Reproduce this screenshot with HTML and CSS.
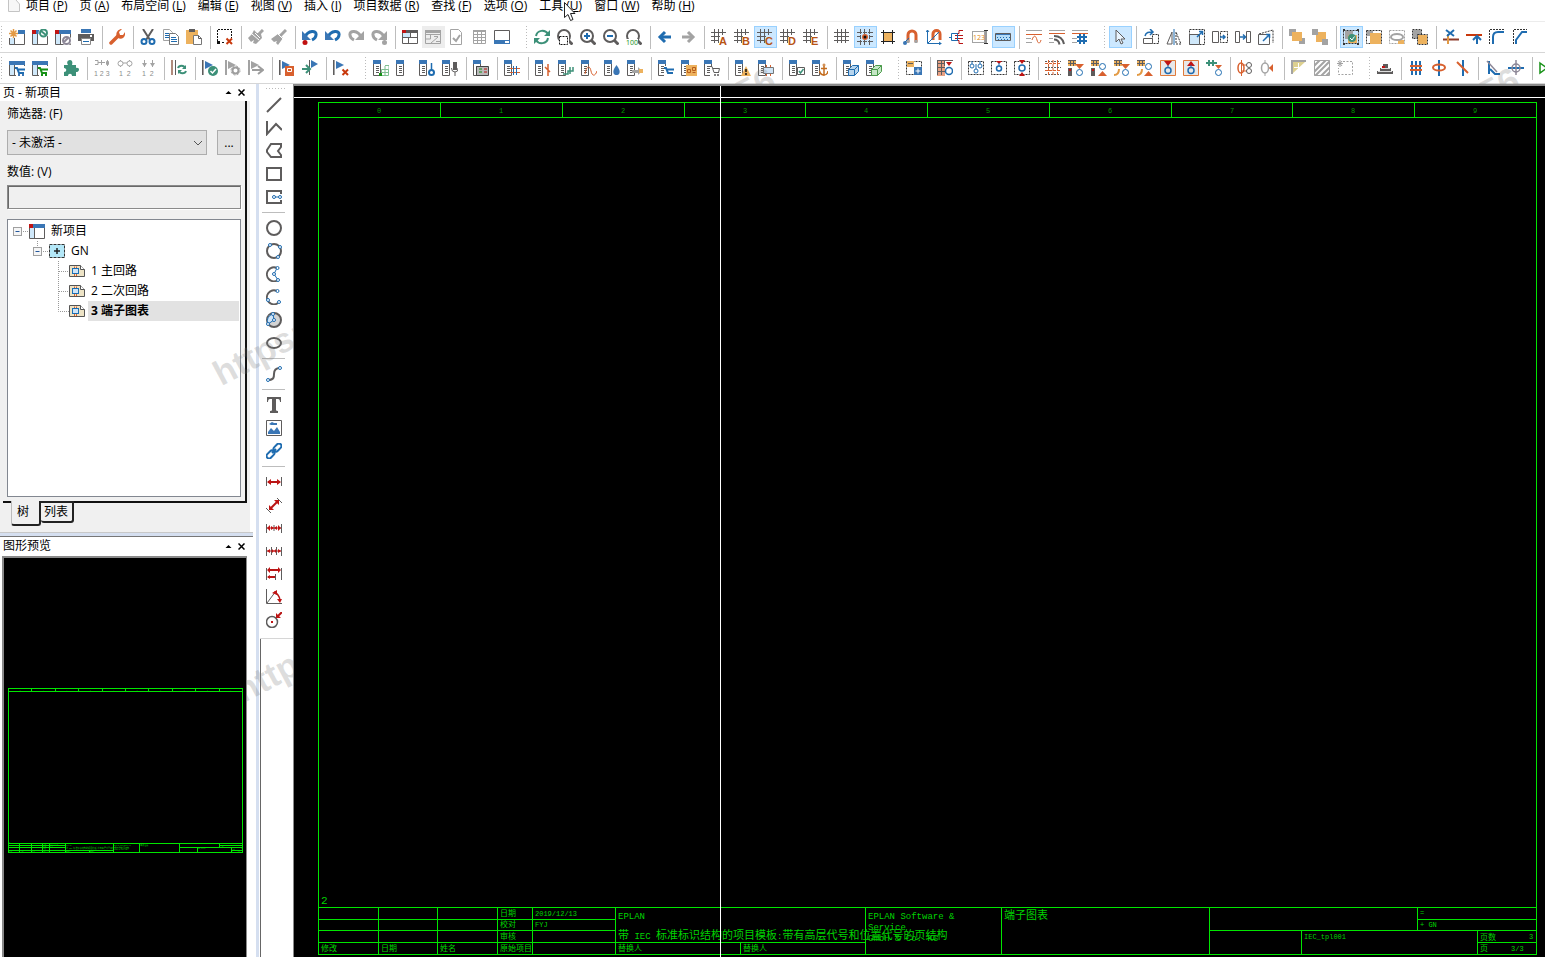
FILE: index.html
```html
<!DOCTYPE html>
<html lang="zh-CN">
<head>
<meta charset="utf-8">
<title>新项目</title>
<link rel="stylesheet" href="styles.css">
</head>
<body>
<svg class="defs" aria-hidden="true">
  <symbol id="win" viewBox="0 0 16 16"><path class="fl" d="M1 5h5v11H1z"/><path class="k" d="M.5 5v10.5h15V5M5.5 5v11"/><path class="fb" d="M0 1h16v4H0z"/></symbol>
  <symbol id="redsq" viewBox="0 0 16 16"><path class="fr" d="M0 1h4v4H0z"/></symbol>
  <symbol id="strip" viewBox="0 0 16 16"><path class="fb" d="M0 0h8v4H0z"/><path class="k" d="M.5 4v11.500h7V4M3 6.500h3M3 8.500h3M3 10.500h3M3 12.500h3"/></symbol>
  <symbol id="flag" viewBox="0 0 16 16"><path class="k" d="M.5 0v15"/><path class="y" d="M1.500 0v15"/><path class="fb" d="M3 1l8 4-8 4z"/></symbol>
  <symbol id="flagoff" viewBox="0 0 16 16"><path class="y" d="M.5 0v15M1.500 0v15"/><path class="fy" d="M3 1l8 4-8 4z"/></symbol>
  <symbol id="grid" viewBox="0 0 16 16"><path class="k" d="M3.500 0v14M7.500 0v14M11.500 0v14M0 3.500h15M0 7.500h15M0 11.500h15"/></symbol>
  <symbol id="grids" viewBox="0 0 16 16"><path class="k" d="M3.500 0v14M7.500 0v14M11.500 0v6M0 3.500h15M0 7.500h9M0 11.500h8"/></symbol>
  <symbol id="lens" viewBox="0 0 16 16"><circle class="k w2" cx="7" cy="7" r="6"/><path class="k w3" d="M11 11l4.500 4.500"/></symbol>
  <symbol id="undo" viewBox="0 0 16 16"><path class="b w3" d="M3 8C6 1 15 1 14 6c0 3-2 4-4 5"/><path class="fb" d="M0 2v9h9z"/></symbol>
  <symbol id="redo" viewBox="0 0 16 16"><path class="y w3" d="M13 8C10 1 1 1 2 6c0 3 2 4 4 5"/><path class="fy" d="M16 2v9H7z"/></symbol>
  <symbol id="dash" viewBox="0 0 16 16"><rect class="kk dd" x=".5" y="1.500" width="15" height="13"/></symbol>
  <symbol id="xred" viewBox="0 0 16 16"><path class="x w2" d="M9.500 9.500l5.500 5.500M15 9.500L9.500 15"/></symbol>
  <symbol id="okay" viewBox="0 0 16 16"><circle class="fg" cx="11" cy="11" r="5"/><path d="M8.500 11l2 2 3.500-4" stroke="#fff" stroke-width="1.500"/></symbol>
  <symbol id="device" viewBox="0 0 16 16"><path class="ft" d="M0 0h8v6H0z"/><path class="k" d="M0 .5h8M0 3.500h8M2.500 0v6M5.500 0v6"/></symbol>
  <symbol id="page" viewBox="0 0 16 14"><path d="M.5 1.500h11l4 4v7H.5z" fill="#ede3c5" stroke="#555"/><path d="M11.500 1.500v4h4" fill="#fff" stroke="#555"/><rect x="3.500" y="4.500" width="6" height="5" fill="#cfe4f7" stroke="#1a6fb5"/><path class="o" d="M5.500 2.500V4M7.500 2.500V4M5.500 10v2M7.500 10v2"/></symbol>
</svg>

<nav class="menu" aria-label="主菜单">
  <svg class="docicon" viewBox="0 0 12 12"><path d="M.5 0v11.500h11V4L8 0" fill="#f7f7f7" stroke="#c4c4c4"/></svg>
  <button>项目 (<u>P</u>)</button><button>页 (<u>A</u>)</button><button>布局空间 (<u>L</u>)</button><button>编辑 (<u>E</u>)</button><button>视图 (<u>V</u>)</button><button>插入 (<u>I</u>)</button><button>项目数据 (<u>R</u>)</button><button>查找 (<u>F</u>)</button><button>选项 (<u>O</u>)</button><button>工具 (<u>U</u>)</button><button>窗口 (<u>W</u>)</button><button>帮助 (<u>H</u>)</button>
</nav>

<div class="bar" role="toolbar" aria-label="标准">
  <button aria-label="新建"><svg viewBox="0 0 16 16"><use href="#win"/><path d="M0 0h9v9H0z" fill="#fff"/><path class="t" stroke-width="1.500" d="M4.500 0v9M0 4.500h9M1.500 1.500l6 6M7.500 1.500l-6 6"/></svg></button>
  <button aria-label="打开"><svg viewBox="0 0 16 16"><use href="#win"/><use href="#redsq"/><circle cx="11.500" cy="4" r="5" fill="#fff"/><circle class="g w2" cx="11.500" cy="4" r="3.500"/><path class="g w2" d="M9 2l5 4"/></svg></button>
  <button aria-label="关闭"><svg viewBox="0 0 16 16"><use href="#win"/><use href="#redsq"/><circle cx="11.500" cy="11.500" r="5" fill="#fff"/><circle cx="11.500" cy="11.500" r="3.500" stroke="#8c8797" stroke-width="2"/><path d="M9 13l4-4" stroke="#8c8797" stroke-width="2"/></svg></button>
  <button aria-label="打印"><svg viewBox="0 0 16 16"><path class="fb" d="M3 0h10v4H3z"/><path class="fk" d="M0 5h16v7h-3v-2H3v2H0z"/><path d="M3.500 9.500h9v6h-9z" fill="#fff" stroke="#888"/><path class="b" d="M5 12.500h6"/><path fill="#fff" d="M12 6h2v2h-2z"/></svg></button>
  <i></i>
  <button aria-label="设置"><svg viewBox="0 0 16 16"><path class="o" stroke-width="3.500" stroke-linecap="round" d="M2 14l7-7"/><path class="fo" d="M8 8C6 4 9 0 13 0l-3 3 1 3 3 0 2-3c1 5-3 8-7 6z"/></svg></button>
  <i></i>
  <button aria-label="剪切"><svg viewBox="0 0 16 16"><path class="k w2" d="M3 0l7 11M13 0L6 11"/><circle class="b w2" cx="4" cy="12.500" r="2.500"/><circle class="b w2" cx="12" cy="12.500" r="2.500"/></svg></button>
  <button aria-label="复制"><svg viewBox="0 0 16 16"><path d="M.5.500h6l3 3v8h-9z" fill="#fff" class="y"/><path class="b" d="M2 4.500h4M2 6.500h4M2 8.500h4"/><path d="M6.500 4.500h6l3 3v8h-9z" fill="#fff" stroke="#777"/><path class="b" d="M8 8.500h5M8 10.500h6M8 12.500h6"/></svg></button>
  <button aria-label="粘贴"><svg viewBox="0 0 16 16"><path class="ft" d="M0 1h12v14H0z"/><path class="fk" d="M3 0h6v3H3z"/><path d="M7.500 6.500h5l3 3v6h-8z" fill="#fff" stroke="#777"/><path class="k" d="M12.500 6.500v3h3"/></svg></button>
  <i></i>
  <button aria-label="删除"><svg viewBox="0 0 16 16"><path d="M.5 12V.5h14V9" stroke="#111" stroke-dasharray="2 1"/><path d="M0 12h3v3H0zM5 13h2v1H5z" fill="#111"/><use href="#xred"/></svg></button>
  <i></i>
  <button aria-label="格式刷"><svg viewBox="0 0 16 16"><path class="y w3" d="M15 1l-6 6"/><path class="fy" d="M0 9l4-4 2-4 3 3 4 1 1 4-6 6-3-1 1-3-3 2z"/><path d="M4 5l7 6M7 4l5 5" stroke="#fff"/></svg></button>
  <button aria-label="应用格式"><svg viewBox="0 0 16 16"><path class="y w3" d="M15 1l-6 6"/><path class="fy" d="M0 10l7-5 5 4-5 7-2-2 1-2-3 1z"/><path d="M7 5l5 5" stroke="#fff"/></svg></button>
  <i></i>
  <button aria-label="撤消列表"><svg viewBox="0 0 16 16"><use href="#undo"/><circle cx="3" cy="13.500" r="2.500" fill="#c01010"/></svg></button>
  <button aria-label="撤消"><svg viewBox="0 0 16 16"><use href="#undo"/></svg></button>
  <button aria-label="恢复"><svg viewBox="0 0 16 16"><use href="#redo"/></svg></button>
  <button aria-label="恢复列表"><svg viewBox="0 0 16 16"><use href="#redo"/><circle class="fy" cx="13.500" cy="13.500" r="2.500"/></svg></button>
  <i></i>
  <button aria-label="工作区域"><svg viewBox="0 0 16 16"><path class="k" d="M.5 2.500h15v12H.5zM.5 8.500h15M8.500 2v6M6.500 8v6"/><path class="fl" d="M1 4h7v4H1z"/><path class="fk" d="M0 1h16v3H0z"/><path class="fr" d="M0 1h4v3H0z"/></svg></button>
  <button class="gray" aria-label="窗口"><svg viewBox="0 0 16 16"><path class="y" d="M.5 1.500h15v13H.5zM0 5.500h16M5.500 6v4H1M9 7.500h4M11 12.500h4M6 14l7-6"/><path class="fy" d="M0 1h16v3H0z"/></svg></button>
  <button aria-label="检查"><svg viewBox="0 0 16 16"><path class="y" d="M2.500.500h8l3 3v12h-11z"/><path class="y w2" d="M5 9l3 3 4-6"/></svg></button>
  <button aria-label="表格"><svg viewBox="0 0 16 16"><path class="y" d="M2.500 1.500h12v13h-12zM3 5.500h11M3 8.500h11M3 11.500h11M6.500 3v11M10.500 3v11"/><path class="fy" d="M2 1h13v2H2z"/></svg></button>
  <button aria-label="屏幕"><svg viewBox="0 0 16 16"><path class="k" d="M.5 1.500h15v10H.5z"/><path class="fb" d="M0 11h16v4H0z"/><path fill="#fff" d="M11 12h4v2h-4z"/></svg></button>
  <i class="grip"></i>
  <button aria-label="刷新"><svg viewBox="0 0 16 16"><path class="g w2" d="M2 7c1-6 9-7 12-2M14 9c-1 6-9 7-12 2"/><path class="fg" d="M16 1v6h-6zM0 15V9h6z"/></svg></button>
  <button aria-label="缩放区域"><svg viewBox="0 0 16 16"><use href="#lens"/><path fill="#fff" d="M2 7h10v9H2z"/><path d="M2.500 7.500h8v8h-8z" stroke="#111" stroke-dasharray="2 1"/></svg></button>
  <button aria-label="放大"><svg viewBox="0 0 16 16"><use href="#lens"/><path class="b w2" d="M4 7h6M7 4v6"/></svg></button>
  <button aria-label="缩小"><svg viewBox="0 0 16 16"><use href="#lens"/><path class="b w2" d="M4 7h6"/></svg></button>
  <button aria-label="整个页"><svg viewBox="0 0 16 16"><use href="#lens"/><path fill="#fff" d="M0 10h12v6H0z"/><text x="0" y="16" font-size="7" fill="#159015">100</text></svg></button>
  <i></i>
  <button aria-label="后退"><svg viewBox="0 0 16 16"><path class="b w3" d="M3 8h11"/><path class="b w3" d="M8 3L3 8l5 5"/></svg></button>
  <button aria-label="前进"><svg viewBox="0 0 16 16"><path class="y w3" d="M2 8h11"/><path class="y w3" d="M8 3l5 5-5 5"/></svg></button>
  <i></i>
  <button aria-label="栅格 A"><svg viewBox="0 0 16 16"><use href="#grids"/><text class="let" x="8" y="16">A</text></svg></button>
  <button aria-label="栅格 B"><svg viewBox="0 0 16 16"><use href="#grids"/><text class="let" x="8" y="16">B</text></svg></button>
  <button class="on" aria-label="栅格 C"><svg viewBox="0 0 16 16"><use href="#grids"/><text class="let" x="8" y="16">C</text></svg></button>
  <button aria-label="栅格 D"><svg viewBox="0 0 16 16"><use href="#grids"/><text class="let" x="8" y="16">D</text></svg></button>
  <button aria-label="栅格 E"><svg viewBox="0 0 16 16"><use href="#grids"/><text class="let" x="8" y="16">E</text></svg></button>
  <i></i>
  <button aria-label="栅格"><svg viewBox="0 0 16 16"><use href="#grid"/></svg></button>
  <button class="on" aria-label="捕捉到栅格"><svg viewBox="0 0 16 16"><path class="k" d="M3.500 0v5M3.500 6v4M3.500 11v5M12.500 0v5M12.500 6v4M12.500 11v5M0 3.500h5M6 3.500h4M11 3.500h5M0 12.500h5M6 12.500h4M11 12.500h5M7.500 0v5M7.500 11v5M0 7.500h4M12 7.500h4"/><circle class="fo" cx="8" cy="8" r="3"/><circle cx="8" cy="8" r="1.500" fill="#111"/></svg></button>
  <button aria-label="对齐到栅格"><svg viewBox="0 0 16 16"><path class="ft" d="M4 4h8v8H4z"/><path d="M3.500 1v14M12.500 1v14M1 3.500h14M1 12.500h14" stroke="#222"/></svg></button>
  <button aria-label="对象捕捉"><svg viewBox="0 0 16 16"><path class="o w3" d="M5 13V6a4 4 0 0 1 8 0v7"/><path class="y w3" d="M5 11v3M13 11v3"/><circle class="fb" cx="2" cy="14" r="2"/><path class="b" d="M2 13l4-4"/></svg></button>
  <button aria-label="设计模式"><svg viewBox="0 0 16 16"><path class="o w3" d="M7 11V5a3.500 3.500 0 0 1 7 0v6"/><path class="b" d="M1.500 1v13.500h14M2 14L13 3M0 3l1.500-2L3 3M13 13l2 1.500-2 1.500"/></svg></button>
  <button aria-label="智能连接"><svg viewBox="0 0 16 16"><path class="rd" d="M7 4.500h3v-3h4M7 11.500h3v3h4M6 6.500h8M6 9.500h8"/><path class="b" d="M2.500 4.500h6v7h-6zM0 8.500h3"/></svg></button>
  <button aria-label="坐标输入"><svg viewBox="0 0 16 16"><rect class="y" x=".5" y="2.500" width="12" height="11"/><text x="1" y="11" font-size="7" fill="#e08a20">123</text><path d="M12 1.500h4M12 14.500h4M14 2v12" stroke="#333"/></svg></button>
  <button class="on" aria-label="插入点"><svg viewBox="0 0 16 16"><path fill="#b4dcf8" class="k" d="M.5 4.500h15v7H.5z"/><path class="fb" d="M1 5h14v1H1z"/><path class="b" stroke-dasharray="1 2" d="M2 8.500h13M3 10.500h12"/></svg></button>
  <i></i>
  <button aria-label="连接符号"><svg viewBox="0 0 16 16"><path class="y" d="M0 1.500h16M0 9.500h5M0 13.500h6"/><path class="o" d="M0 5.500h16M6 11c2-6 4-4 5 0s3 4 4 0"/></svg></button>
  <button aria-label="信号"><svg viewBox="0 0 16 16"><path class="y" d="M0 1.500h16M0 9.500h4M0 13.500h5"/><path class="o" d="M0 4.500h16"/><path class="k w2" d="M5 7c6 0 9 3 10 8M5 10.500c3 0 5 2 5.500 5"/></svg></button>
  <button aria-label="网格连接"><svg viewBox="0 0 16 16"><path class="y" d="M0 1.500h16M0 9.500h5M0 13.500h5"/><path class="o" d="M0 4.500h16"/><path class="b w2" d="M8 5v10M12 5v10M5 8h10M5 12h10"/></svg></button>
  <i class="grip"></i>
  <button class="on" aria-label="选择"><svg viewBox="0 0 16 16"><path d="M4 1v12l3-3 2 5 2-1-2-4h4z" fill="#eaf5ff" class="k"/></svg></button>
  <i></i>
  <button aria-label="旋转"><svg viewBox="0 0 16 16"><rect class="kk dd" x="9.500" y="5.500" width="6" height="9"/><path fill="#fff" class="k" d="M.5 9.500h9v5h-9z"/><path class="b" stroke-width="1.500" d="M2 7c1-4 4-4 7-4M7 0l3 3-3 3"/></svg></button>
  <button aria-label="镜像"><svg viewBox="0 0 16 16"><path class="k" d="M6 3v12H1z"/><path class="kk dd" d="M10 3v12h5z"/><path class="b" d="M8 0v16"/></svg></button>
  <button aria-label="比例缩放"><svg viewBox="0 0 16 16"><rect class="kk dd" x=".5" y=".5" width="15" height="15"/><path class="k" d="M.5 5.500h10v10H.5z" fill="#cfe8fa"/><path class="b" stroke-width="1.500" d="M8 8l5-5M10 2.500h3.500V6"/></svg></button>
  <button aria-label="移动"><svg viewBox="0 0 16 16"><path class="k" d="M.5 2.500h6v11h-6z"/><path class="kk dd" d="M8.500 2.500h7v11h-7z"/><path class="b" stroke-width="1.500" d="M8 8h5M11 6l2 2-2 2"/></svg></button>
  <button aria-label="拉伸"><svg viewBox="0 0 16 16"><path class="k" d="M.5 2.500h4v11h-4zM11.500 2.500h4v11h-4z"/><path class="b" stroke-width="1.500" d="M5 8h5M8 5.500L10.500 8 8 10.500"/></svg></button>
  <button aria-label="修改长度"><svg viewBox="0 0 16 16"><path class="kk dd" d="M1 5l14-4v13"/><path class="k" d="M.5 5.500h11v10H.5z" fill="#f6fbff"/><path class="b" stroke-width="1.500" d="M5 12l6-6M8 5.500h3.500V9"/></svg></button>
  <i></i>
  <button aria-label="置于后面"><svg viewBox="0 0 16 16"><path class="fy" d="M0 0h7v7H0zM10 9h6v6h-6z"/><path class="ft" d="M3 3h10v9H3z"/></svg></button>
  <button aria-label="置于前面"><svg viewBox="0 0 16 16"><path class="ft" d="M4 3h10v10H4z"/><path class="fy" d="M0 0h6v6H0zM10 10h6v6h-6z"/></svg></button>
  <i></i>
  <button class="on" aria-label="编组"><svg viewBox="0 0 16 16"><use href="#dash"/><path class="fy" d="M2 2h8v8H2z"/><path class="ft" d="M5 6h9v8H5z"/><path fill="#333" d="M0 0h2v2H0zM14 0h2v2h-2zM0 14h2v2H0zM14 14h2v2h-2z"/><circle cx="9" cy="9" r="4" class="fg"/><path stroke="#fff" d="M7 9l2 2 2.500-3.500"/></svg></button>
  <button aria-label="解组"><svg viewBox="0 0 16 16"><use href="#dash"/><path class="fy" d="M1 2h6v5H1z"/><path class="ft" d="M4 4h11v11H4z"/></svg></button>
  <button aria-label="组合编辑"><svg viewBox="0 0 16 16"><rect class="y dd" x=".5" y="1.500" width="15" height="13"/><path class="ft" d="M9 11h6v4H9z"/><ellipse class="y w2" cx="8" cy="8" rx="6" ry="3"/></svg></button>
  <button aria-label="组属性"><svg viewBox="0 0 16 16"><path class="fy" d="M1 1h8v8H1z"/><path class="kk dd" d="M.5.500h9v9h-9z"/><path class="ft" d="M6 6h9v9H6z"/><path class="kk dd" d="M5.500 5.500h10v10h-10z"/></svg></button>
  <i></i>
  <button aria-label="修剪"><svg viewBox="0 0 16 16"><path d="M0 10.500h16" stroke="#8c3b2a" stroke-width="2"/><path class="t w2" d="M5 15V5"/><path class="b w2" d="M3 1l8 6M11 1L4 7"/></svg></button>
  <button aria-label="延长"><svg viewBox="0 0 16 16"><path class="x w2" d="M0 6h16"/><path class="b w2" d="M11 15V8M7 11l4-4 4 4"/></svg></button>
  <button aria-label="圆角"><svg viewBox="0 0 16 16"><path class="kk dd" d="M.5 15V.5H15"/><path class="b w2" d="M4 15V8q0-5 5-5h6"/></svg></button>
  <button aria-label="倒角"><svg viewBox="0 0 16 16"><path class="kk dd" d="M1.500 15V.5H15"/><path class="b w2" d="M4 15v-4l6-8h5"/></svg></button>
</div>

<div class="bar" role="toolbar" aria-label="项目数据">
  <button aria-label="部件管理"><svg viewBox="0 0 16 16"><use href="#win"/><path fill="#fff" d="M7 6h9v10H7z"/><path class="b w2" d="M6 8h2l2 5h5M9 9.500h7"/><path class="fb" d="M9 14h2v2H9zM13 14h2v2h-2z"/></svg></button>
  <button aria-label="部件选择"><svg viewBox="0 0 16 16"><use href="#win"/><path fill="#fff" d="M7 6h9v10H7z"/><path class="gr w2" d="M6 8h2l2 5h5M9 9.500h7"/><path fill="#159015" d="M9 14h2v2H9zM13 14h2v2h-2z"/></svg></button>
  <i></i>
  <button aria-label="插件"><svg viewBox="0 0 16 16"><path class="fg" d="M1 5h4c-2-3 0-5 2-5s3 2 2 5h4v3c4-1 4 4 0 4v4H9c0-3-4-3-4 0H1v-4c3 0 3-4 0-4z"/></svg></button>
  <i></i>
  <button aria-label="编号"><svg viewBox="0 0 16 16"><path class="y" d="M1 .5h3v4H1M4 2.500h7M7.500 0v5M13.500 0v6M12.500 1.500h2v3h-2z"/><text class="num" x="0" y="16">1 2 3</text></svg></button>
  <button aria-label="设备编号"><svg viewBox="0 0 16 16"><path class="y" d="M3.500 0v7M12.500 0v7M6 3h4"/><circle class="y" cx="3.500" cy="3.500" r="2.500" fill="#fff"/><circle class="y" cx="12.500" cy="3.500" r="2.500" fill="#fff"/><text class="num" x="2" y="16">1  2</text></svg></button>
  <button aria-label="端子编号"><svg viewBox="0 0 16 16"><path class="y" d="M4.500 0v7M12.500 0v7"/><path class="fy" d="M2 3h5l-2.500 4zM10 3h5l-2.500 4z"/><text class="num" x="2" y="16">1  2</text></svg></button>
  <i></i>
  <button aria-label="更新"><svg viewBox="0 0 16 16"><path d="M1 0v15" stroke="#b08a7c" stroke-width="2"/><path class="k" d="M4.500 0v15"/><path class="g w2" d="M7 8c1-3 6-3 7 0M15 11c-1 3-6 3-7 0"/><path class="fg" d="M15 5v4h-4zM7 14v-4h4z"/></svg></button>
  <i></i>
  <button aria-label="检查项目"><svg viewBox="0 0 16 16"><use href="#flag"/><use href="#okay"/></svg></button>
  <button aria-label="检查设置"><svg viewBox="0 0 16 16"><use href="#flagoff"/><circle cx="10.500" cy="10.500" r="3" stroke="#9d9d9d" stroke-width="2" fill="#fff"/><circle cx="10.500" cy="10.500" r="4.500" stroke="#9d9d9d" stroke-dasharray="2 1.500"/></svg></button>
  <button aria-label="检查下一个"><svg viewBox="0 0 16 16"><use href="#flagoff"/><path d="M4 10h10M10 6l5 4-5 4" stroke="#9d9d9d" stroke-width="2"/></svg></button>
  <i></i>
  <button aria-label="消息管理"><svg viewBox="0 0 16 16"><use href="#flag"/><path class="fo" d="M6 6h9v10H6z"/><path stroke="#fff" d="M8.500 8.500h4v3h-4z"/></svg></button>
  <button aria-label="转到消息"><svg viewBox="0 0 16 16"><path class="k" d="M7.500 0v15"/><path class="fb" d="M9 0l7 4-7 4z"/><path class="g w2" d="M0 9h7M4 5l4 4-4 4"/></svg></button>
  <i></i>
  <button aria-label="删除消息"><svg viewBox="0 0 16 16"><use href="#flag"/><use href="#xred"/></svg></button>
  <i class="grip"></i>
  <button aria-label="端子排"><svg viewBox="0 0 16 16"><use href="#strip"/><path stroke="#7fbf90" d="M8.500 9.500h7v6h-7zM12 6v10M8 12.500h8M12 5.500h4V10"/><path fill="#159015" d="M6 13h3v3H6z"/></svg></button>
  <button aria-label="插头"><svg viewBox="0 0 16 16"><use href="#strip"/></svg></button>
  <button aria-label="电缆"><svg viewBox="0 0 16 16"><use href="#strip"/><path class="b" stroke-width="1.500" d="M12.500 3v7"/><circle class="b" stroke-width="2" cx="12.500" cy="12.500" r="2.500"/></svg></button>
  <button aria-label="话筒"><svg viewBox="0 0 16 16"><use href="#strip"/><path class="fk" d="M11 2h4v8h-4z"/><path class="k" d="M9.500 8q0 4 3.500 4t3-4M13 12v4"/></svg></button>
  <i></i>
  <button aria-label="PLC"><svg viewBox="0 0 16 16"><use href="#strip"/><path d="M3.500 6.500h12v9h-12z" fill="#b9b9b9" stroke="#444"/><path class="gr" d="M6 9h3M6 12h3"/><path class="rd" d="M11 9h3M11 12h3"/></svg></button>
  <i></i>
  <button aria-label="连接"><svg viewBox="0 0 16 16"><use href="#strip"/><path class="o" d="M6 8.500h10M6 12.500h10"/><path class="b" d="M9.500 6v9M12.500 6v9"/></svg></button>
  <i></i>
  <button aria-label="连接定义"><svg viewBox="0 0 16 16"><use href="#strip"/><path class="o" stroke-width="1.500" d="M13 4v12M10 7l5 5"/></svg></button>
  <button aria-label="电位"><svg viewBox="0 0 16 16"><use href="#strip"/><path class="g" stroke-width="1.500" d="M5 14h5v-3h5V7M12 7v7"/></svg></button>
  <button aria-label="信号曲线"><svg viewBox="0 0 16 16"><use href="#strip"/><path class="o" d="M4 14c2-10 5-8 6-3s4 6 6 0"/></svg></button>
  <button aria-label="流体"><svg viewBox="0 0 16 16"><use href="#strip"/><path class="fb" d="M12.500 5c6 8 2 10 0 10s-6-2 0-10z"/></svg></button>
  <button aria-label="中断点"><svg viewBox="0 0 16 16"><use href="#strip"/><path class="fy" d="M5 10h6V7l4 4-4 4v-2H5z"/><path class="ft" d="M12 9h4v4h-4z"/></svg></button>
  <i></i>
  <button aria-label="部件列表"><svg viewBox="0 0 16 16"><use href="#strip"/><path fill="#fff" d="M6 6h10v10H6z"/><path class="b w2" d="M6 8h2l2 5h5M9 9.500h7"/></svg></button>
  <button aria-label="安装板"><svg viewBox="0 0 16 16"><use href="#strip"/><path class="ft" d="M5 5h11v11H5z"/><path d="M6.500 9.500h3v3h-3zM11.500 7.500h3v3h-3zM11.500 12.500h3" stroke="#b85c1c"/></svg></button>
  <button aria-label="购物车"><svg viewBox="0 0 16 16"><use href="#strip"/><path fill="#fff" d="M6 6h10v10H6z"/><path class="k" d="M6 6.500h2l2 6h5M9 8.500h6.500l-1 4"/><circle cx="11" cy="15" r="1" class="fk"/><circle cx="14" cy="15" r="1" class="fk"/></svg></button>
  <i></i>
  <button aria-label="警告"><svg viewBox="0 0 16 16"><use href="#strip"/><path class="ft" d="M11 6l5 10H6z"/><path stroke="#111" stroke-width="1.500" d="M11 9v3M11 13v2"/></svg></button>
  <button aria-label="宏"><svg viewBox="0 0 16 16"><use href="#strip"/><path d="M5.500 7.500h10v6h-10z" fill="#cfe4f7" stroke="#777"/><path class="o" d="M8.500 5v2M12.500 5v2M8.500 14v2M12.500 14v2"/></svg></button>
  <i></i>
  <button aria-label="修订"><svg viewBox="0 0 16 16"><use href="#strip"/><path d="M8.500 7.500h7v7h-7z" fill="#fff" class="k"/><path class="g" stroke-width="1.500" d="M10 11l1.500 2 3-4"/></svg></button>
  <button aria-label="锚点"><svg viewBox="0 0 16 16"><use href="#strip"/><path d="M12 6v10M9 8.500h6M7.500 11q1 4 4.500 4t4-4" stroke="#c36c1e" stroke-width="1.500"/><circle cx="12" cy="5" r="1" stroke="#c36c1e"/></svg></button>
  <i></i>
  <button aria-label="3D 布局"><svg viewBox="0 0 16 16"><use href="#strip"/><path d="M5.500 9.500l4-4h6v6l-4 4h-6zM5.500 9.500h6v6M11.500 9.500l4-4" fill="#b7d5ee" class="b"/></svg></button>
  <button aria-label="3D 宏"><svg viewBox="0 0 16 16"><use href="#strip"/><path d="M5.500 9.500l4-4h6v6l-4 4h-6zM5.500 9.500h6v6M11.500 9.500l4-4" fill="#c5e6c5" stroke="#4a9a4a"/></svg></button>
  <i class="grip"></i>
  <button aria-label="插入框"><svg viewBox="0 0 16 16"><use href="#dash"/><path class="ft" d="M1 1h7v6H1z"/><path class="k" d="M2 3.500h5"/><path class="fb" d="M8 7h8v8H8z"/><path stroke="#fff" d="M9.500 11h5M12 8.500v5"/></svg></button>
  <i></i>
  <button aria-label="符号"><svg viewBox="0 0 16 16"><path class="fo" d="M0 0h8v16H0z" opacity=".6"/><path class="k" d="M.5 0v15M4.500 0v15M0 3.500h8M0 7.500h8M0 11.500h8M0 .5h16M7.500 0v6"/><path class="fr" d="M9 2h6l-3 4z"/><circle class="b" stroke-width="1.500" cx="12" cy="11" r="3.500" fill="#fff"/></svg></button>
  <i></i>
  <button aria-label="设备组"><svg viewBox="0 0 16 16"><use href="#dash"/><g class="b" fill="#fff"><circle cx="4" cy="6" r="2"/><circle cx="12" cy="6" r="2"/><circle cx="8" cy="11" r="2"/></g><path class="b" d="M4 1v3M12 1v3M8 4v5"/></svg></button>
  <button aria-label="单端设备"><svg viewBox="0 0 16 16"><use href="#dash"/><path class="fr" d="M5 1h6L8 4z"/><path class="b" d="M8 3v3"/><circle class="b" stroke-width="1.500" cx="8" cy="8.500" r="2.500" fill="#fff"/></svg></button>
  <button aria-label="双端设备"><svg viewBox="0 0 16 16"><use href="#dash"/><path class="fr" d="M5 0h6L8 4zM5 16h6l-3-4z"/><circle class="b" stroke-width="1.500" cx="8" cy="8" r="3" fill="#fff"/></svg></button>
  <i></i>
  <button aria-label="多线"><svg viewBox="0 0 16 16"><path class="k" stroke-dasharray="2 1" d="M0 1.500h16M0 7.500h16M0 14.500h16"/><path class="o" stroke-dasharray="3 1" d="M0 3.500h16M0 10.500h16M3.500 0v16M8 0v16M12.500 0v16"/></svg></button>
  <button aria-label="放置 1"><svg viewBox="0 0 16 16"><use href="#device"/><path class="fk" d="M0 8h4v8H0z"/><path class="fr" d="M1 9h2v2H1z"/><path class="fo" d="M7 4h9l-4.500 5z"/><circle class="b" cx="11.500" cy="12.500" r="3"/></svg></button>
  <button aria-label="放置 2"><svg viewBox="0 0 16 16"><use href="#device"/><path class="fk" d="M0 8h4v8H0z"/><path class="fr" d="M1 9h2v2H1z"/><path class="fo" d="M7 16h9l-4.500-5z"/><circle class="b" cx="11.500" cy="6.500" r="3"/></svg></button>
  <button aria-label="放置 3"><svg viewBox="0 0 16 16"><use href="#device"/><path class="t w2" d="M0 15c4 0 5-3 5-6"/><path class="fo" d="M7 4h9l-4.500 5z"/><circle class="b" cx="11.500" cy="12.500" r="3"/></svg></button>
  <button aria-label="放置 4"><svg viewBox="0 0 16 16"><use href="#device"/><path class="t w2" d="M0 15c4 0 5-3 5-6"/><path class="fo" d="M7 16h9l-4.500-5z"/><circle class="b" cx="11.500" cy="6.500" r="3"/></svg></button>
  <button aria-label="下行"><svg viewBox="0 0 16 16"><path d="M.5.500h15v15H.5z" fill="#e8e8e8" stroke="#e07a3a"/><path class="fr" d="M4 1h8L8 6z"/><path class="b" d="M8 5v3"/><circle class="b" stroke-width="1.500" cx="8" cy="10.500" r="3"/></svg></button>
  <button aria-label="上行"><svg viewBox="0 0 16 16"><path d="M.5.500h15v15H.5z" fill="#e8e8e8" stroke="#e07a3a"/><path class="fr" d="M8 1l4 5H4z"/><path class="b" d="M8 5v3"/><circle class="b" stroke-width="1.500" cx="8" cy="10.500" r="3"/></svg></button>
  <button aria-label="序列"><svg viewBox="0 0 16 16"><path class="g w2" d="M0 3h11M3 0v6M7 0v6"/><path class="fo" d="M9 5h7l-3.500 4z"/><circle class="b" cx="12.500" cy="12.500" r="3"/></svg></button>
  <i></i>
  <button aria-label="电缆屏蔽"><svg viewBox="0 0 16 16"><path class="o" d="M4.500 0v16M5 5h5M5 11h5"/><ellipse class="o" stroke-width="1.500" cx="4" cy="8" rx="3" ry="5"/><circle class="k" cx="12" cy="5" r="2.500"/><circle class="k" cx="12" cy="11" r="2.500"/></svg></button>
  <button aria-label="屏蔽层"><svg viewBox="0 0 16 16"><path class="y" d="M5 0v16M5 8h8"/><ellipse class="y" stroke-width="1.500" cx="5" cy="8" rx="3.500" ry="5" fill="#fff"/><path class="fo" d="M13 4v8l-4-4z"/></svg></button>
  <i></i>
  <button aria-label="导轨"><svg viewBox="0 0 16 16"><path fill="#ddd08f" d="M1 2h13L1 14z"/><path class="fy" d="M0 0h15v2H0zM0 0h2v14H0z"/><path stroke="#fff" d="M7.500 3v7M3 7.500h7"/></svg></button>
  <button aria-label="填充"><svg viewBox="0 0 16 16"><path class="y" d="M.5.500h15v15H.5z"/><path class="y w2" d="M0 6l6-6M0 12L12 0M1 16L16 1M7 16l9-9M12 16l4-4"/></svg></button>
  <button aria-label="新区域"><svg viewBox="0 0 16 16"><path class="y" stroke-dasharray="2 1.500" d="M6 1.500h9.500v13H1.500V8"/><path class="y" d="M3 0v7M0 3.500h6M1 1l4 5M5 1L1 6"/></svg></button>
  <i class="grip"></i>
  <button aria-label="端子"><svg viewBox="0 0 16 16"><path class="fk" d="M6 4h5v4h3v3h2v3H0v-3h3V8h3z"/><path d="M1 11.500h14M4 8.500h9" stroke="#ddd"/><path class="fr" d="M5 6h3v2H5z"/></svg></button>
  <i></i>
  <button aria-label="三线"><svg viewBox="0 0 16 16"><path class="b w2" d="M4 1v14M8 1v14M12 1v14"/><path class="o w2" d="M2 6h12M2 10h12"/></svg></button>
  <button aria-label="电缆定义"><svg viewBox="0 0 16 16"><path class="b w2" d="M8 0v16"/><ellipse class="o w2" cx="8" cy="7.500" rx="6" ry="3"/></svg></button>
  <button aria-label="连接点"><svg viewBox="0 0 16 16"><path class="b w2" d="M9 0v16"/><path class="o w2" d="M3 2l11 11"/></svg></button>
  <i></i>
  <button aria-label="角"><svg viewBox="0 0 16 16"><path class="b w2" d="M4 1v13M5 9l5 5h5"/><path d="M2 1l10 11" stroke="#8c8797" stroke-width="1.500"/></svg></button>
  <button aria-label="节点"><svg viewBox="0 0 16 16"><path class="b w2" d="M0 8h16"/><circle cx="8" cy="8" r="4" stroke="#8c8797" stroke-width="1.500"/><path d="M8 0v15" stroke="#8c8797" stroke-width="1.500"/></svg></button>
  <i></i>
  <button aria-label="运行"><svg viewBox="0 0 16 16"><path class="gr" stroke-width="1.500" d="M1 3l7 5-7 5z"/></svg></button>
</div>

<main class="work">
  <aside class="side">
    <section class="panel">
      <header><h2>页 - 新项目</h2><button aria-label="展开"><svg viewBox="0 0 7 7"><path fill="#000" d="M3.500 2L6.500 5h-6z"/></svg></button><button aria-label="关闭"><svg viewBox="0 0 7 7"><path d="M.5.500l6 6M6.500.500l-6 6" stroke="#000" stroke-width="1.500"/></svg></button></header>
      <div class="pages">
        <div class="form">
          <label for="filter">筛选器: (F)</label>
          <div class="filter">
            <span class="combo"><select id="filter"><option>- 未激活 -</option></select><svg viewBox="0 0 10 6"><path d="M1 1l4 4 4-4" stroke="#555"/></svg></span>
            <button class="more" aria-label="筛选器设置">...</button>
          </div>
          <label for="value">数值: (V)</label>
          <input id="value" type="text">
          <ul class="tree">
            <li><svg class="l1" viewBox="0 0 16 20"><rect x=".5" y="6.500" width="8" height="8" fill="#f5f5f5" stroke="#a0a0a0"/><path d="M2.500 10.500h4" stroke="#24579c"/><path class="dot" d="M10 10.500h6"/></svg><svg class="ti" viewBox="0 0 16 16"><use href="#win"/><use href="#redsq"/></svg><span>新项目</span></li>
            <li><svg class="l2" viewBox="0 0 16 20"><path class="dot" d="M4.500 0v6M10 10.500h6"/><rect x=".5" y="6.500" width="8" height="8" fill="#f5f5f5" stroke="#a0a0a0"/><path d="M2.500 10.500h4" stroke="#24579c"/></svg><svg class="ti" viewBox="0 0 16 16"><rect x=".5" y="1.500" width="15" height="13" fill="#b4e8f8" stroke="#333" stroke-dasharray="3 1"/><path d="M5 8h6M8 5v6" stroke="#222" stroke-width="1.500"/></svg><span>GN</span></li>
            <li><svg class="l3" viewBox="0 0 11 20"><path class="dot" d="M.5 0v20M1 10.500h10"/></svg><svg class="ti" viewBox="0 0 16 14"><use href="#page"/></svg><span>1 主回路</span></li>
            <li><svg class="l3" viewBox="0 0 11 20"><path class="dot" d="M.5 0v20M1 10.500h10"/></svg><svg class="ti" viewBox="0 0 16 14"><use href="#page"/></svg><span>2 二次回路</span></li>
            <li><svg class="l3" viewBox="0 0 11 20"><path class="dot" d="M.5 0v10.500h10.500"/></svg><svg class="ti" viewBox="0 0 16 14"><use href="#page"/></svg><span class="sel">3 端子图表</span></li>
          </ul>
        </div>
        <div class="tabs"><button class="cur">树</button><button>列表</button></div>
      </div>
    </section>
    <div class="split"></div>
    <section class="panel">
      <header><h2>图形预览</h2><button aria-label="展开"><svg viewBox="0 0 7 7"><path fill="#000" d="M3.500 2L6.500 5h-6z"/></svg></button><button aria-label="关闭"><svg viewBox="0 0 7 7"><path d="M.5.500l6 6M6.500.500l-6 6" stroke="#000" stroke-width="1.500"/></svg></button></header>
      <div class="preview"><svg viewBox="0 0 242 400"><use href="#sheet" transform="translate(-57 111) scale(.1925)"/></svg></div>
    </section>
  </aside>

  <div class="draw">
    <div class="vbar" role="toolbar" aria-label="图形">
      <button aria-label="直线"><svg viewBox="0 0 16 16"><path class="k w2" d="M1 15L15 1"/></svg></button>
      <button aria-label="折线"><svg viewBox="0 0 16 16"><path class="k w2" d="M1 1v13L10 4l6 6"/></svg></button>
      <button aria-label="多边形"><svg viewBox="0 0 16 16"><path class="k w2" d="M5 1h10v3l-3 4 3 4v2H5L1 9V7z"/></svg></button>
      <button aria-label="长方形"><svg viewBox="0 0 16 16"><path class="k w2" d="M1 2h14v12H1z"/></svg></button>
      <button aria-label="中心长方形"><svg viewBox="0 0 16 16"><path class="k w2" d="M15 5V2H1v12h14v-3"/><path class="b" d="M8 8h6"/><circle class="b" cx="8" cy="8" r="1.500" fill="#fff"/><circle class="b" cx="14" cy="8" r="1.500" fill="#fff"/></svg></button>
      <i></i>
      <button aria-label="圆"><svg viewBox="0 0 16 16"><circle class="k w2" cx="8" cy="8" r="7"/></svg></button>
      <button aria-label="三点圆"><svg viewBox="0 0 16 16"><circle class="k w2" cx="8" cy="8" r="7"/><g class="b" fill="#fff"><circle cx="4" cy="2" r="1.500"/><circle cx="14" cy="4" r="1.500"/><circle cx="12" cy="14" r="1.500"/></g></svg></button>
      <button aria-label="中心圆弧"><svg viewBox="0 0 16 16"><path class="k w2" d="M11 2a7 7 0 1 0 1 12"/><path class="b" d="M11 2L8 8l4 6"/><g class="b" fill="#fff"><circle cx="11.500" cy="2" r="1.500"/><circle cx="8" cy="8" r="1.500"/><circle cx="12" cy="14" r="1.500"/></g></svg></button>
      <button aria-label="三点圆弧"><svg viewBox="0 0 16 16"><path class="k w2" d="M11 2a7 7 0 1 0 1 12"/><g class="b" fill="#fff"><circle cx="11.500" cy="2" r="1.500"/><circle cx="2" cy="11" r="1.500"/><circle cx="13" cy="13" r="1.500"/></g></svg></button>
      <button aria-label="扇形"><svg viewBox="0 0 16 16"><circle cx="8" cy="8" r="7" fill="#d4d4d4" class="k w2"/><path d="M8 8L7 2A7 7 0 0 0 2 12z" fill="#cfe4f7" class="b"/><g class="b" fill="#fff"><circle cx="7" cy="2" r="1.500"/><circle cx="8" cy="8" r="1.500"/><circle cx="2" cy="12" r="1.500"/></g></svg></button>
      <button aria-label="椭圆"><svg viewBox="0 0 16 16"><ellipse class="k w2" cx="8" cy="8" rx="7" ry="5"/></svg></button>
      <i></i>
      <button aria-label="样条曲线"><svg viewBox="0 0 16 16"><path class="k w2" d="M2 14c6 0 6-3 6-6s1-6 6-6"/><circle class="b" cx="2" cy="14" r="1.500" fill="#fff"/><circle class="b" cx="14" cy="2" r="1.500" fill="#fff"/></svg></button>
      <i></i>
      <button aria-label="文本"><svg viewBox="0 0 16 16"><path class="fk" d="M1 0h14v5h-1q0-3-2-3h-2v11q0 1 2 1v2H4v-2q2 0 2-1V2H4Q2 2 2 5H1z"/></svg></button>
      <button aria-label="图片"><svg viewBox="0 0 16 16"><path class="k" d="M.5.500h15v15H.5z" fill="#fff"/><path class="fb" d="M2 14v-2l3-4 3 3 3-4 3 5v2zM3 4l3-2 2 1h3v2H5z"/></svg></button>
      <button aria-label="超链接"><svg viewBox="0 0 16 16"><g class="b w2"><rect x="7" y="2" width="9" height="5" rx="2.500" transform="rotate(-45 11.500 4.500)"/><rect x="0" y="9" width="9" height="5" rx="2.500" transform="rotate(-45 4.500 11.500)"/></g><path class="b w2" d="M6 10l4-4"/></svg></button>
      <i></i>
      <button aria-label="线性尺寸"><svg viewBox="0 0 16 16"><path class="k" d="M.5 3v9M15.500 3v9"/><path class="rd w2" d="M2 8h12"/><path class="fr" d="M1 8l4-3v6zM15 8l-4-3v6z"/></svg></button>
      <button aria-label="对齐尺寸"><svg viewBox="0 0 16 16"><path class="k" d="M0 11l5 5M11 1l5 5"/><path class="rd w2" d="M4 12l8-8"/><path class="fr" d="M3 13V8l5 5zM13 3v5L8 3z"/></svg></button>
      <button aria-label="连续尺寸"><svg viewBox="0 0 16 16"><path class="k" d="M.5 4v9M15.500 4v9M8 5v6"/><path class="rd" d="M1 8h14"/><path class="fr" d="M1 8l3-3v6zM15 8l-3-3v6zM8 8L5 6v4zM8 8l3-2v4z"/></svg></button>
      <button aria-label="增量尺寸"><svg viewBox="0 0 16 16"><path class="k" d="M.5 4v9M15.500 4v9M5.500 4v8M10.500 4v8"/><path class="rd" d="M1 8h14"/><path class="fr" d="M1 8l3-2v4zM15 8l-3-2v4zM8 8L6 6v4zM8 8l2-2v4z"/></svg></button>
      <button aria-label="基线尺寸"><svg viewBox="0 0 16 16"><path class="k" d="M.5 2v12M15.500 2v12M9.500 8v6"/><path class="rd w2" d="M2 4h12M2 11h7"/><path class="fr" d="M1 4l3-3v6zM15 4l-3-3v6zM1 11l3-2v4z"/></svg></button>
      <button aria-label="角度尺寸"><svg viewBox="0 0 16 16"><path class="k" d="M.5 0v14.500H16M1 14L10 2"/><path class="rd" stroke-width="1.500" d="M8 3q5 2 6 8"/><path class="fr" d="M6 4l5-3v5zM11 10h5l-2 4z"/></svg></button>
      <button aria-label="半径尺寸"><svg viewBox="0 0 16 16"><circle class="k" stroke-width="1.500" cx="6" cy="10" r="5.500"/><path class="fr" d="M5 9h2v2H5zM10 6V1l5 5z"/><path class="rd w2" d="M16 0l-4 4"/></svg></button>
    </div>
    <div class="gap"></div>
  </div>

  <div class="canvas">
    <svg viewBox="294 86 1251 871" preserveAspectRatio="xMinYMin slice">
      <g id="sheet">
        <path class="ln" d="M318.500 102.500h1218v852h-1218zM318 117.500h1218M440.500 102v15M562.500 102v15M684.500 102v15M805.500 102v15M927.500 102v15M1049.500 102v15M1171.500 102v15M1292.500 102v15M1414.500 102v15M318 907.500h1218M318 919.500h297M318 930.500h297M318 942.500h547M1209 930.500h327M1417 919.500h119M1477 942.500h59M378.500 907v47M437.500 907v47M497.500 907v47M532.500 907v47M615.500 907v47M740.500 942v12M865.500 907v47M1001.500 907v47M1209.500 907v47M1301.500 930v24M1417.500 907v23M1477.500 930v24"/>
        <g class="hd"><text x="379" y="113">0</text><text x="501" y="113">1</text><text x="623" y="113">2</text><text x="745" y="113">3</text><text x="866" y="113">4</text><text x="988" y="113">5</text><text x="1110" y="113">6</text><text x="1232" y="113">7</text><text x="1353" y="113">8</text><text x="1475" y="113">9</text></g>
        <g class="sm"><text x="500" y="916">日期</text><text x="500" y="927">校对</text><text x="500" y="939">审核</text><text x="500" y="951">原始项目</text><text x="321" y="951">修改</text><text x="381" y="951">日期</text><text x="440" y="951">姓名</text><text x="618" y="951">替换人</text><text x="743" y="951">替换人</text><text x="1480" y="940">页数</text><text x="1480" y="951">页</text>
        <text class="mo" x="535" y="916">2019/12/13</text><text class="mo" x="535" y="927">FYJ</text><text class="mo" x="1304" y="939">IEC_tpl001</text><text class="mo" x="1420" y="915">=</text><text class="mo" x="1420" y="927">+ GN</text><text class="mo" x="1529" y="939">3</text><text class="mo" x="1511" y="951">3/3</text></g>
        <g class="lg"><text class="two" x="321" y="904">2</text><text class="la" x="618" y="919">EPLAN</text><text x="618" y="939">带<tspan class="la" xml:space="preserve"> IEC </tspan>标准标识结构的项目模板<tspan class="la">:</tspan>带有高层代号和位置代号的页结构</text><text class="la" x="868" y="919">EPLAN Software &amp;</text><text class="la" x="868" y="930">Service</text><text class="la" x="868" y="941">GmbH &amp; Co. KG</text><text x="1004" y="919">端子图表</text></g>
      </g>
      <path class="cross" d="M720.500 86v871M294 97.500h4000"/>
    </svg>
  </div>
  <span class="wm wm1">https:</span><span class="wm wm2">https:</span>
</main>
<span class="wm wm3">56</span><span class="wm wm4">56</span>
<svg class="pointer" viewBox="0 0 12 19"><path d="M.5.500v15l3.500-3 2.500 6 2.500-1-2.500-6H11z" fill="#fff" stroke="#222"/></svg>
</body>
</html>
```
FILE: styles.css
```css
* { box-sizing: border-box; }
html, body { height: 100%; }
body {
  margin: 0;
  display: flex;
  flex-direction: column;
  overflow: hidden;
  position: relative;
  background: #fff;
  color: #000;
  font: 12px/16px "Open Sans", "Noto Sans CJK SC", sans-serif;
}
button, input, select { font: inherit; color: inherit; margin: 0; }
button { border: 0; padding: 0; background: none; }
svg { display: block; fill: none; stroke-width: 1; }
.defs { position: absolute; width: 0; height: 0; }

/* icon palette */
.k { stroke: #5e5c5c; } .kk { stroke: #333; } .b { stroke: #1f6cb0; } .o { stroke: #d8602e; } .g { stroke: #3c9078; }
.y { stroke: #a3a3a3; } .t { stroke: #e29a45; } .rd { stroke: #b81414; } .x { stroke: #c8380c; } .gr { stroke: #159015; }
.fk { fill: #5e5c5c; } .fb { fill: #3a76b5; } .fo { fill: #d8602e; } .fg { fill: #3c9078; }
.fy { fill: #a3a3a3; } .ft { fill: #edb25e; } .fr { fill: #c01414; } .fl { fill: #cfe8fa; }
.w2 { stroke-width: 2; } .w3 { stroke-width: 3; }
.dd { stroke-dasharray: 2 1; }
.dot { stroke: #999; stroke-dasharray: 1 1; }
.let { font: bold 11px "Liberation Sans", sans-serif; fill: #b85414; }
.num { font: 7px "Liberation Sans", sans-serif; fill: #8c8c8c; white-space: pre; }

.menu {
  flex: none;
  height: 22px;
  display: flex;
  align-items: flex-start;
  gap: 12px;
  padding-left: 8px;
  border-bottom: 1px solid #ececec;
  white-space: nowrap;
}
.menu button { line-height: 12px; }
.menu .docicon { width: 12px; height: 12px; margin-right: -6px; }

.bar {
  flex: none;
  height: 31px;
  display: flex;
  align-items: center;
  padding-left: 6px;
  border-bottom: 1px solid #d6d6d6;
  overflow: hidden;
  background: repeating-linear-gradient(#bbb 0 1px, transparent 1px 3px) 1px 4px / 1px 22px no-repeat;
}
.bar button { flex: none; width: 23px; height: 22px; padding: 3px 4px 3px 3px; }
.bar svg { width: 16px; height: 16px; }
.bar i { flex: none; width: 8px; height: 23px; background: linear-gradient(#bdbdbd, #bdbdbd) 4px 0 / 1px 100% no-repeat; }
.bar i.grip { width: 17px; background: repeating-linear-gradient(#bbb 0 1px, transparent 1px 3px) 12px 0 / 1px 100% no-repeat; }
.bar .on { background: #cce8ff; box-shadow: inset 0 0 0 1px #99d1ff; }
.bar .gray { background: #ededed; }

.work { flex: 1; min-height: 0; display: flex; position: relative; overflow: hidden; }
.side {
  flex: none;
  width: 253px;
  display: grid;
  grid-template-rows: minmax(0, 149fr) 5px minmax(0, 140fr);
}
.panel { display: flex; flex-direction: column; min-height: 0; }
.panel header { flex: none; height: 17px; display: flex; align-items: center; padding: 0 8px 0 3px; }
.panel + .split + .panel header { height: 19px; }
.panel h2 { flex: 1; margin: 0; font-size: 12px; font-weight: 400; }
.panel header button { margin-left: 6px; }
.panel header svg { width: 7px; height: 7px; }
.pages { flex: 1; min-height: 0; display: flex; flex-direction: column; margin-right: 3px; padding-bottom: 7px; background: #f0f0f0; }
.form {
  flex: 1;
  min-height: 0;
  display: flex;
  flex-direction: column;
  margin: 0 3px 0 3px;
  padding: 5px 4px 4px;
  border-right: 2px solid #111;
  border-bottom: 2px solid #111;
}
.form label { height: 16px; }
.filter { display: flex; gap: 10px; margin: 8px 0 9px; }
.combo { flex: 1; position: relative; }
.combo svg { position: absolute; right: 4px; top: 10px; width: 10px; height: 6px; }
select { appearance: none; width: 100%; height: 25px; padding: 0 4px; border: 1px solid #adadad; border-radius: 0; background: #e1e1e1; }
.more { width: 24px; height: 25px; border: 1px solid #adadad; background: #e1e1e1; }
#value { height: 24px; margin-top: 5px; border: 1px solid #8a8a8a; background: #f0f0f0; box-shadow: inset 1px 1px #696969, 1px 1px #fff; border-radius: 0; }
.tree { flex: 1; min-height: 0; margin: 10px 0 0; padding: 1px 1px 0 5px; list-style: none; border: 1px solid #828790; background: #fff; overflow: hidden; }
.tree li { display: flex; align-items: center; height: 20px; }
.tree svg { flex: none; }
.tree .l1, .tree .l2 { width: 16px; height: 20px; }
.tree .l2 { margin-left: 20px; }
.tree .l3 { width: 11px; height: 20px; margin-left: 45px; }
.tree .ti { width: 16px; height: 16px; }
.tree span { margin-left: 3px; padding: 0 3px; line-height: 20px; }
.tree .sel { flex: 1; background: #e2e2e2; font-weight: 700; }
.tabs { flex: none; display: flex; align-items: flex-start; height: 24px; margin-top: -2px; padding-left: 11px; }
.tabs button { height: 22px; padding: 0 4px 0 3px; border: solid #222; border-width: 2px 2px 2px 0; border-radius: 0 0 3px 3px; background: #f0f0f0; }
.tabs .cur { width: 30px; height: 25px; padding: 0 0 0 5px; text-align: left; border-width: 0 2px 2px 1px; border-left-color: #bbb; }
.split { background: #d5dff0; border-top: 1px solid #c8c8c8; border-bottom: 1px solid #777; }
.preview { flex: 1; min-height: 0; position: relative; z-index: 2; margin: 0 6px 0 2px; border: solid #8a8a8a; border-width: 2px 1px 0 2px; background: #000; }
.preview svg { width: 100%; height: 100%; }

.draw { flex: none; width: 37px; display: flex; flex-direction: column; border-left: 3px solid #d5dff0; margin-left: 3px; padding-left: 1px; background: #fff; }
.vbar { padding: 9px 0 7px 2px; border-bottom: 1px solid #d6d6d6; background: repeating-linear-gradient(90deg, #bbb 0 1px, transparent 1px 3px) 6px 4px / 20px 1px no-repeat; }
.vbar button { display: block; width: 23px; height: 23px; padding: 4px 3px 3px 4px; }
.vbar svg { width: 16px; height: 16px; }
.vbar i { display: block; height: 8px; width: 23px; background: linear-gradient(#bdbdbd, #bdbdbd) 0 4px / 100% 1px no-repeat; }
.gap { flex: 1; border-left: 1px solid #666; }

.canvas { flex: 1; min-width: 0; position: relative; z-index: 2; border: solid #8a8a8a; border-width: 2px 0 0 1px; background: #000; }
.canvas > svg { width: 100%; height: 100%; }
.ln { stroke: #00e600; vector-effect: non-scaling-stroke; shape-rendering: crispEdges; }
.cross { stroke: #fff; shape-rendering: crispEdges; }
.hd { font: 7px "Liberation Mono", monospace; fill: #009600; text-anchor: middle; }
.sm { font: 8px "Noto Sans CJK SC", sans-serif; fill: #00d200; }
.mo { font: 7px "Liberation Mono", monospace; }
.lg { font: 11px "Noto Sans CJK SC", sans-serif; fill: #00d200; }
.la { font: 9px "Liberation Mono", monospace; }
.two { font: 11px "Liberation Mono", monospace; }

.wm { position: absolute; z-index: 1; font: bold 35px/40px "Liberation Sans", sans-serif; color: rgba(120, 120, 120, .25); transform: rotate(-28deg); pointer-events: none; }
.wm1 { left: 210px; top: 249px; }
.wm2 { left: 232px; top: 566px; }
.wm3, .wm4 { height: 40px; top: 66px; z-index: 0; }
.wm3 { left: 736px; }
.wm4 { left: 1480px; }
.pointer { position: absolute; left: 564px; top: 2px; width: 12px; height: 19px; }
```
